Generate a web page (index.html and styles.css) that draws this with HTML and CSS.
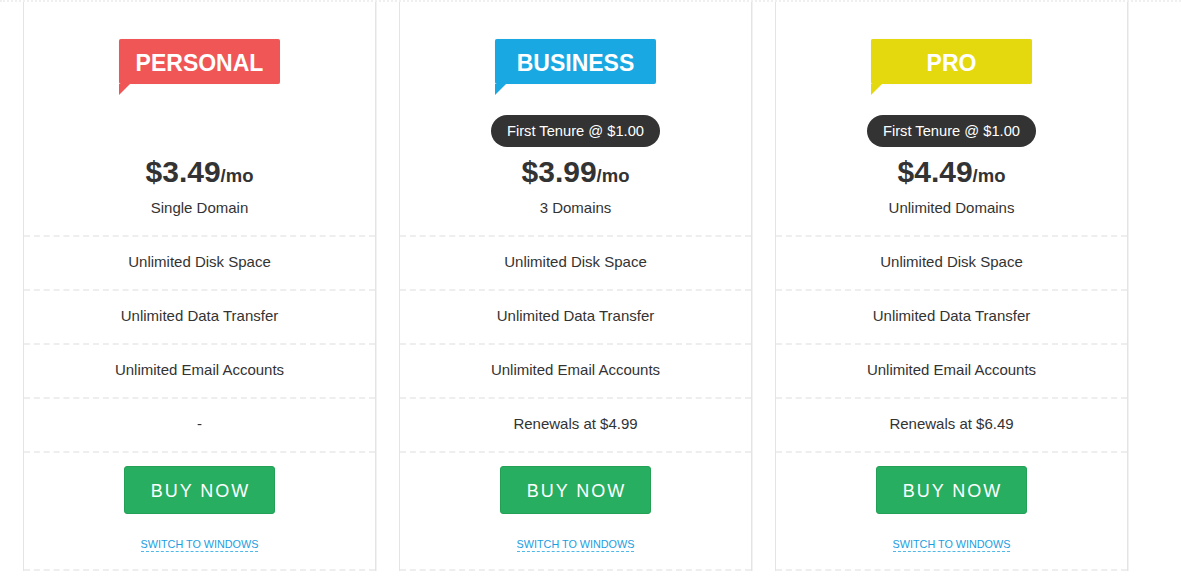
FILE: index.html
```html
<!DOCTYPE html>
<html lang="en">
<head>
<meta charset="utf-8">
<title>Hosting Plans</title>
<link rel="stylesheet" href="styles.css">
</head>
<body>
<div class="plans">
  <div class="card">
    <div class="head">
      <div class="ribbon red">PERSONAL</div>
      <div class="pill hidden">First Tenure @ $1.00</div>
      <div class="price">$3.49<span class="per">/mo</span></div>
      <div class="domains">Single Domain</div>
    </div>
    <div class="row">Unlimited Disk Space</div>
    <div class="row">Unlimited Data Transfer</div>
    <div class="row">Unlimited Email Accounts</div>
    <div class="row">-</div>
    <div class="foot">
      <a class="buy" href="#">BUY NOW</a>
      <a class="switch" href="#">SWITCH TO WINDOWS</a>
    </div>
  </div>
  <div class="card">
    <div class="head">
      <div class="ribbon blue">BUSINESS</div>
      <div class="pill">First Tenure @ $1.00</div>
      <div class="price">$3.99<span class="per">/mo</span></div>
      <div class="domains">3 Domains</div>
    </div>
    <div class="row">Unlimited Disk Space</div>
    <div class="row">Unlimited Data Transfer</div>
    <div class="row">Unlimited Email Accounts</div>
    <div class="row">Renewals at $4.99</div>
    <div class="foot">
      <a class="buy" href="#">BUY NOW</a>
      <a class="switch" href="#">SWITCH TO WINDOWS</a>
    </div>
  </div>
  <div class="card">
    <div class="head">
      <div class="ribbon yellow">PRO</div>
      <div class="pill">First Tenure @ $1.00</div>
      <div class="price">$4.49<span class="per">/mo</span></div>
      <div class="domains">Unlimited Domains</div>
    </div>
    <div class="row">Unlimited Disk Space</div>
    <div class="row">Unlimited Data Transfer</div>
    <div class="row">Unlimited Email Accounts</div>
    <div class="row">Renewals at $6.49</div>
    <div class="foot">
      <a class="buy" href="#">BUY NOW</a>
      <a class="switch" href="#">SWITCH TO WINDOWS</a>
    </div>
  </div>
</div>
</body>
</html>
```
FILE: styles.css
```css
html, body {
  margin: 0;
  padding: 0;
  background: #fff;
}
body {
  font-family: "Liberation Sans", Arial, Helvetica, sans-serif;
  color: #333;
}
.plans {
  display: flex;
  gap: 23px;
  padding: 0 0 0 23px;
  border-top: 2px dotted #efefef;
}
.card {
  width: 351px;
  border: 1px solid #e4e4e4;
  border-top: 0;
  border-bottom: 0;
  box-shadow: 1px 0 0 #f2f2f2, 0 1px 0 #e8e8e8;
  display: flex;
  flex-direction: column;
  text-align: center;
  background: #fff;
}
.head {
  height: 233px;
  padding-top: 37px;
  box-sizing: border-box;
  display: flex;
  flex-direction: column;
  align-items: center;
}
.ribbon {
  position: relative;
  width: 161px;
  height: 45px;
  line-height: 48px;
  border-radius: 2px;
  color: #fff;
  font-size: 23px;
  font-weight: bold;
  box-shadow: 0 0 1px rgba(0,0,0,0.15);
}
.ribbon::after {
  content: "";
  position: absolute;
  left: 0;
  top: 45px;
  width: 0;
  height: 0;
  border-top: 11px solid currentColor;
  border-right: 11px solid transparent;
}
.ribbon.red { background: #f05656; }
.ribbon.red::after { border-top-color: #f05656; }
.ribbon.blue { background: #1aa8e2; }
.ribbon.blue::after { border-top-color: #1aa8e2; }
.ribbon.yellow { background: #e4d80f; }
.ribbon.yellow::after { border-top-color: #e4d80f; }
.pill {
  margin-top: 31px;
  height: 32px;
  line-height: 32px;
  padding: 0 16px;
  border-radius: 16px;
  background: #333;
  color: #fff;
  font-size: 14.7px;
}
.pill.hidden { visibility: hidden; }
.price {
  margin-top: 7px;
  line-height: 36px;
  font-size: 30px;
  font-weight: bold;
  color: #333;
}
.per {
  font-size: 18.5px;
}
.domains {
  margin-top: 4px;
  line-height: 20px;
  font-size: 15px;
  color: #333;
}
.row {
  height: 52px;
  line-height: 50px;
  border-top: 2px dashed #eeeeee;
  font-size: 15px;
  color: #333;
}
.foot {
  border-top: 2px dashed #eeeeee;
  border-bottom: 2px dashed #eeeeee;
  padding: 13px 0 17px;
  display: flex;
  flex-direction: column;
  align-items: center;
}
.buy {
  display: block;
  width: 151px;
  height: 48px;
  line-height: 48px;
  box-sizing: border-box;
  background: #27ae60;
  border: 1px solid #22a055;
  border-radius: 3px;
  color: #fff;
  text-decoration: none;
  font-size: 18px;
  letter-spacing: 2px;
  text-indent: 2px;
}
.switch {
  display: inline-block;
  margin-top: 24px;
  font-size: 10.8px;
  line-height: 13px;
  color: #1a9ee2;
  text-decoration: none;
  border-bottom: 1px dashed #4bb9ea;
}
```
